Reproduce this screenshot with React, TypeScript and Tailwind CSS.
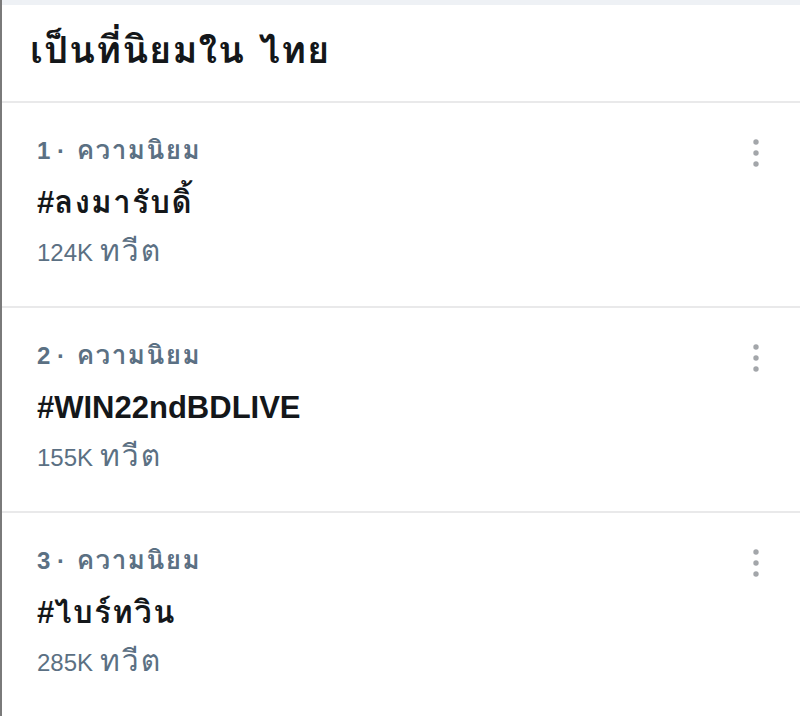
import React from "react";

type Trend = { rank: number; thai: string; latin: string; count: string };

const trends: Trend[] = [
  { rank: 1, thai: "ลงมารับดิ้", latin: "", count: "124K" },
  { rank: 2, thai: "", latin: "WIN22ndBDLIVE", count: "155K" },
  { rank: 3, thai: "ไบร์ทวิน", latin: "", count: "285K" },
];

function Dots() {
  return (
    <svg width="10" height="30" viewBox="0 0 10 30" className="shrink-0">
      <circle cx="5" cy="4" r="2.7" fill="#a3a6aa" />
      <circle cx="5" cy="15" r="2.7" fill="#a3a6aa" />
      <circle cx="5" cy="26" r="2.7" fill="#a3a6aa" />
    </svg>
  );
}

export default function App() {
  return (
    <div className="w-[800px] h-[716px] overflow-hidden bg-white border-l-2 border-[#7a7a7a] font-['Liberation_Sans',Loma,sans-serif]">
      <div className="h-[5px] bg-[#eef1f5]" />
      <div className="h-[98px] flex items-center pl-[28px] pb-[6px] border-b-2 border-[#e9e9ea]">
        <h1 className="font-[Loma,sans-serif] text-[38px] tracking-[1px] font-bold text-[#14171a] leading-none">
          เป็นที่นิยมใน ไทย
        </h1>
      </div>
      {trends.map((t, i) => (
        <div
          key={t.rank}
          className={
            i < 2
              ? "flex items-start justify-between pl-[35px] pr-[39px] pt-[22px] h-[205px] border-b-2 border-[#e9e9ea]"
              : "flex items-start justify-between pl-[35px] pr-[39px] pt-[22px] h-[205px]"
          }
        >
          <div className="flex flex-col">
            <div className="text-[24px] leading-[52px] font-bold text-[#5b7083] whitespace-nowrap">
              <span className="leading-none">{t.rank} · </span>
              <span className="font-[Loma,sans-serif] text-[26px] tracking-[1.5px] leading-none ml-[5px]">
                ความนิยม
              </span>
            </div>
            <div className="text-[31px] leading-[52px] font-bold text-[#14171a] whitespace-nowrap">
              <span className="leading-none">#{t.latin}</span>
              {t.thai && (
                <span className="font-[Loma,sans-serif] text-[31px] tracking-[1.5px] leading-none">
                  {t.thai}
                </span>
              )}
            </div>
            <div className="text-[24px] leading-[48px] text-[#5b7083] whitespace-nowrap">
              <span className="leading-none">{t.count}</span>
              <span className="font-[Loma,sans-serif] text-[30px] tracking-[2px] leading-none ml-[7px]">
                ทวีต
              </span>
            </div>
          </div>
          <div className="pt-[13px]">
            <Dots />
          </div>
        </div>
      ))}
    </div>
  );
}
